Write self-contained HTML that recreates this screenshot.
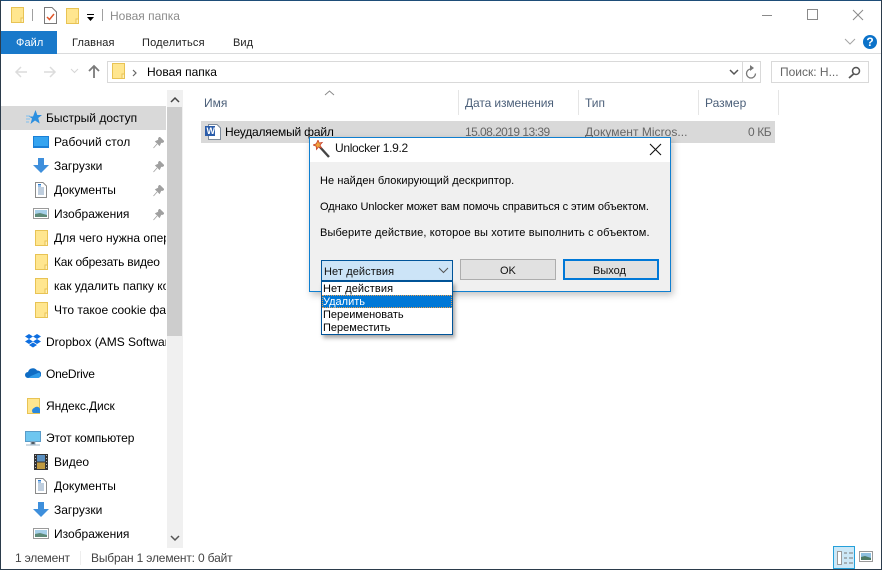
<!DOCTYPE html>
<html lang="ru"><head><meta charset="utf-8">
<style>
html,body{margin:0;padding:0;background:#fff}
#w{position:relative;width:882px;height:570px;overflow:hidden;background:#fff;font-family:"Liberation Sans",sans-serif;font-size:12px;color:#000}
#w div,#w svg,#w span.t{position:absolute}
.t{white-space:nowrap;line-height:16px;letter-spacing:0}
.r{font-size:11px;letter-spacing:.1px}
</style></head><body>
<div id="w">
<svg width="0" height="0" style="position:absolute">
<defs>
<g id="fold"><rect x=".5" y=".5" width="12" height="15" fill="#ffe68f" stroke="#e8c354"/><rect x="10" y="11" width="2.500" height="4.500" fill="#fff0b8" stroke="#e8c354" stroke-width="1"/></g>
<g id="doc"><path d="M.5.5H8L11.500 4V15.500H.5Z" fill="#fff" stroke="#8a8a8a"/><path d="M3 6h6M3 8h6M3 10h6M3 12h6" stroke="#7f9cbc"/><path d="M3 2.500h3M3 4h3" stroke="#2f7fd0"/></g>
<g id="img"><rect x=".5" y=".5" width="15" height="10" fill="#fff" stroke="#9a9a9a"/><rect x="2" y="2" width="12" height="7" fill="#a5cfe8"/><path d="M2 6l5-1 7 2v2H2z" fill="#5d8a78"/></g>
<g id="dl"><path d="M5 0h6v7h5l-8 8-8-8h5z" fill="#3e8fdc"/></g>
<g id="pin"><path d="M6.500 0L11 4.500 9.500 5.500 8 5.500 6.500 8.500 2.500 4.500 5.500 3 5.500 1.500zM4 7L.5 11" fill="#a0a0a0" stroke="#a0a0a0" stroke-width=".8"/></g>
</defs></svg>

<!-- window border -->
<div style="left:0;top:0;width:882px;height:1px;background:#1e4d78"></div>
<div style="left:0;top:0;width:1px;height:570px;background:#2b3b4b"></div>
<div style="right:0;top:0;width:1px;height:570px;background:#2b3b4b"></div>
<div style="left:0;top:569px;width:882px;height:1px;background:#2b3b4b"></div>

<!-- title bar -->
<svg style="left:11px;top:7px" width="14" height="17"><use href="#fold"/></svg>
<div style="left:32px;top:9px;width:1px;height:12px;background:#a0a0a0"></div>
<svg style="left:44px;top:7px" width="13" height="17"><path d="M.5.5H8L12.500 5V16.500H.5Z" fill="#fff" stroke="#7a7a7a"/><path d="M3 10l2.500 2.500L10 7" fill="none" stroke="#e0562a" stroke-width="1.500"/></svg>
<svg style="left:66px;top:8px" width="14" height="16"><use href="#fold"/></svg>
<svg style="left:86px;top:13px" width="9" height="9"><rect x="1" y="1" width="7" height="1" fill="#000"/><path d="M1 4h7L4.500 8z" fill="#000"/></svg>
<div style="left:102px;top:9px;width:1px;height:12px;background:#a0a0a0"></div>
<span class="t" style="left:110px;top:8px;color:#8b8b8b">Новая папка</span>
<div style="left:762px;top:15px;width:10px;height:1px;background:#8a8a8a"></div>
<div style="left:807px;top:9px;width:9px;height:9px;border:1px solid #8a8a8a"></div>
<svg style="left:852px;top:9px" width="12" height="12"><path d="M1 1l10 10M11 1L1 11" stroke="#8a8a8a" fill="none"/></svg>

<!-- ribbon -->
<div style="left:1px;top:31px;width:56px;height:23px;background:#1979ca"></div>
<span class="t r" style="left:16px;top:35px;color:#fff">Файл</span>
<span class="t r" style="left:72px;top:35px;color:#222">Главная</span>
<span class="t r" style="left:142px;top:35px;color:#222;letter-spacing:.2px">Поделиться</span>
<span class="t r" style="left:233px;top:35px;color:#222">Вид</span>
<div style="left:57px;top:53px;width:824px;height:1px;background:#dadbdc"></div>
<svg style="left:843px;top:37px" width="14" height="9"><path d="M2 2l5 5 5-5" fill="none" stroke="#a5a5a5"/></svg>
<div style="left:863px;top:35px;width:14px;height:14px;border-radius:50%;background:#0b72c9;color:#fff;font-weight:bold;font-size:12px;line-height:14px;text-align:center">?</div>

<!-- nav bar -->
<svg style="left:14px;top:65px" width="14" height="14"><path d="M13 7H2M7 2L2 7l5 5" fill="none" stroke="#dcdcdc" stroke-width="1.500"/></svg>
<svg style="left:43px;top:65px" width="14" height="14"><path d="M1 7h11M7 2l5 5-5 5" fill="none" stroke="#dcdcdc" stroke-width="1.500"/></svg>
<svg style="left:70px;top:68px" width="9" height="7"><path d="M1 1l3.500 3.500L8 1" fill="none" stroke="#d5d5d5"/></svg>
<svg style="left:87px;top:64px" width="14" height="15"><path d="M7 14V2M2 7l5-5 5 5" fill="none" stroke="#7a7a7a" stroke-width="1.800"/></svg>
<div style="left:107px;top:61px;width:652px;height:20px;border:1px solid #d9d9d9"></div>
<div style="left:742px;top:61px;width:1px;height:22px;background:#d9d9d9"></div>
<svg style="left:112px;top:63px" width="14" height="17"><use href="#fold"/></svg>
<svg style="left:132px;top:69px" width="6" height="8"><path d="M1 1l3 3-3 3" fill="none" stroke="#666" stroke-width="1.200"/></svg>
<span class="t" style="left:147px;top:64px">Новая папка</span>
<svg style="left:729px;top:69px" width="11" height="8"><path d="M1 1l4 4 4-4" fill="none" stroke="#555" stroke-width="1.500"/></svg>
<svg style="left:745px;top:64px" width="12" height="15"><path d="M6 3a4.500 4.500 0 1 0 4.500 4.500" fill="none" stroke="#777" stroke-width="1.300" transform="translate(0 2)"/><path d="M5 1l4 3-4 3z" fill="#777"/></svg>
<div style="left:771px;top:61px;width:96px;height:20px;border:1px solid #d9d9d9"></div>
<span class="t" style="left:780px;top:64px;color:#666">Поиск: Н...</span>
<svg style="left:848px;top:66px" width="13" height="13"><circle cx="8" cy="5" r="3.500" fill="none" stroke="#555" stroke-width="1.500"/><path d="M5.500 8L1 12" stroke="#555" stroke-width="1.800"/></svg>

<!-- sidebar -->
<div style="left:1px;top:106px;width:165px;height:24px;background:#d9d9d9"></div>
<div style="left:167px;top:90px;width:16px;height:458px;background:#f0f0f0"></div>
<div style="left:167px;top:107px;width:15px;height:229px;background:#cdcdcd"></div>
<svg style="left:170px;top:96px" width="10" height="8"><path d="M1 6l4-4 4 4" fill="none" stroke="#444" stroke-width="1.500"/></svg>
<svg style="left:170px;top:534px" width="10" height="8"><path d="M1 2l4 4 4-4" fill="none" stroke="#555" stroke-width="1.500"/></svg>

<svg style="left:26px;top:110px" width="16" height="15"><path d="M9.500 0l1.800 5H16l-3.800 3 1.500 5.500L9 10.500 4.500 14l1.500-5.500L3 6.500h4z" fill="#2b8fe0"/><path d="M0 6h4M0 9h4M0 12h3" stroke="#7ec0f0"/></svg>
<span class="t" style="left:46px;top:110px">Быстрый доступ</span>

<svg style="left:33px;top:136px" width="16" height="12"><rect width="16" height="12" fill="#1a7fd6"/><rect x="1" y="1" width="14" height="9" fill="#35a4f0"/></svg>
<span class="t" style="left:54px;top:134px;letter-spacing:.08px">Рабочий стол</span>
<svg style="left:153px;top:137px" width="11" height="12"><use href="#pin"/></svg>
<svg style="left:33px;top:158px" width="16" height="16"><use href="#dl"/></svg>
<span class="t" style="left:54px;top:158px">Загрузки</span>
<svg style="left:153px;top:161px" width="11" height="12"><use href="#pin"/></svg>
<svg style="left:35px;top:182px" width="12" height="16"><use href="#doc"/></svg>
<span class="t" style="left:54px;top:182px">Документы</span>
<svg style="left:153px;top:185px" width="11" height="12"><use href="#pin"/></svg>
<svg style="left:33px;top:208px" width="16" height="11"><use href="#img"/></svg>
<span class="t" style="left:54px;top:206px">Изображения</span>
<svg style="left:153px;top:209px" width="11" height="12"><use href="#pin"/></svg>

<svg style="left:35px;top:230px" width="13" height="16"><use href="#fold"/></svg>
<div style="left:54px;top:230px;width:112px;height:16px;overflow:hidden"><span class="t" style="left:0;top:0">Для чего нужна оперативная</span></div>
<svg style="left:35px;top:254px" width="13" height="16"><use href="#fold"/></svg>
<span class="t" style="left:54px;top:254px;letter-spacing:-.2px">Как обрезать видео</span>
<svg style="left:35px;top:278px" width="13" height="16"><use href="#fold"/></svg>
<div style="left:54px;top:278px;width:112px;height:16px;overflow:hidden"><span class="t" style="left:0;top:0">как удалить папку которая</span></div>
<svg style="left:35px;top:302px" width="13" height="16"><use href="#fold"/></svg>
<div style="left:54px;top:302px;width:112px;height:16px;overflow:hidden"><span class="t" style="left:0;top:0">Что такое cookie файлы</span></div>

<svg style="left:25px;top:334px" width="16" height="14" viewBox="0 0 16 14"><path d="M4 0l4 2.500L4 5 0 2.500zM12 0l4 2.500L12 5 8 2.500zM4 5l4 2.500L4 10 0 7.500zM12 5l4 2.500L12 10 8 7.500zM4 11l4-2.500 4 2.500-4 2.500z" fill="#0d6ee0"/></svg>
<div style="left:46px;top:334px;width:120px;height:16px;overflow:hidden"><span class="t" style="left:0;top:0">Dropbox (AMS Software</span></div>
<svg style="left:25px;top:367px" width="16" height="12"><path d="M3 11a3 3 0 0 1 0-6 5 5 0 0 1 9-1.500 3.500 3.500 0 0 1 1 7.500z" fill="#0f6cc4"/><path d="M3 11h10a3 3 0 0 0 1-5.500L6 9z" fill="#2f9ae8"/></svg>
<span class="t" style="left:46px;top:366px;letter-spacing:-.25px">OneDrive</span>
<svg style="left:27px;top:398px" width="14" height="16"><use href="#fold"/><path d="M6 15a3 3 0 0 1 1-5 3.500 3.500 0 0 1 6 1v4z" fill="#2a87dd"/></svg>
<span class="t" style="left:46px;top:398px;letter-spacing:-.1px">Яндекс.Диск</span>
<svg style="left:25px;top:431px" width="16" height="15"><rect x=".5" y=".5" width="15" height="10" fill="#6ec6f0" stroke="#5a9cc8"/><path d="M6 11h4v2H6zM1 14h14" stroke="#9fb4c4"/></svg>
<span class="t" style="left:46px;top:430px;letter-spacing:-.1px">Этот компьютер</span>
<svg style="left:34px;top:454px" width="14" height="16"><rect width="14" height="16" fill="#333"/><rect x="3" y="1" width="8" height="6.500" fill="#5a8fc0"/><rect x="3" y="8.500" width="8" height="6.500" fill="#c09a40"/><path d="M1.500 1v14M12.500 1v14" stroke="#bbb" stroke-dasharray="1 2"/></svg>
<span class="t" style="left:54px;top:454px">Видео</span>
<svg style="left:35px;top:478px" width="12" height="16"><use href="#doc"/></svg>
<span class="t" style="left:54px;top:478px">Документы</span>
<svg style="left:33px;top:502px" width="16" height="16"><use href="#dl"/></svg>
<span class="t" style="left:54px;top:502px">Загрузки</span>
<svg style="left:33px;top:528px" width="16" height="11"><use href="#img"/></svg>
<span class="t" style="left:54px;top:526px">Изображения</span>

<!-- columns -->
<svg style="left:324px;top:90px" width="11" height="6"><path d="M1 5l4.500-4L10 5" fill="none" stroke="#8a8a8a"/></svg>
<span class="t" style="left:204px;top:95px;color:#4c607a">Имя</span>
<div style="left:458px;top:90px;width:1px;height:25px;background:#e5e5e5"></div>
<span class="t" style="left:465px;top:95px;color:#4c607a;letter-spacing:-.1px">Дата изменения</span>
<div style="left:578px;top:90px;width:1px;height:25px;background:#e5e5e5"></div>
<span class="t" style="left:585px;top:95px;color:#4c607a">Тип</span>
<div style="left:698px;top:90px;width:1px;height:25px;background:#e5e5e5"></div>
<span class="t" style="left:705px;top:95px;color:#4c607a">Размер</span>
<div style="left:778px;top:90px;width:1px;height:25px;background:#e5e5e5"></div>

<!-- file row -->
<div style="left:201px;top:121px;width:574px;height:22px;background:#d9d9d9"></div>
<svg style="left:205px;top:124px" width="16" height="16"><path d="M3.500.5H12L15.500 4V15.500H3.500Z" fill="#fff" stroke="#7d8a9a"/><rect x="0" y="2" width="10" height="10" fill="#2a5caa"/><text x="1.500" y="10" font-size="9" font-weight="bold" fill="#fff" font-family="Liberation Sans">W</text></svg>
<span class="t" style="left:225px;top:124px;letter-spacing:-.2px">Неудаляемый файл</span>
<span class="t" style="left:465px;top:124px;color:#666;letter-spacing:-.55px">15.08.2019 13:39</span>
<span class="t" style="left:585px;top:124px;color:#666;letter-spacing:.03px">Документ Micros...</span>
<span class="t" style="left:748px;top:124px;color:#666;letter-spacing:-.4px">0 КБ</span>

<!-- dialog -->
<div style="left:309px;top:137px;width:360px;height:153px;background:#f0f0f0;border:1px solid #0f7fd0;box-shadow:2px 3px 7px rgba(0,0,0,.25)"></div>
<div style="left:310px;top:138px;width:360px;height:24px;background:#fff"></div>
<svg style="left:313px;top:140px" width="17" height="18"><path d="M6 6l10 11" stroke="#444" stroke-width="2.400"/><path d="M5 0l1.200 3 3-.5L7 5l1.500 3-3-1-2 2.500-.3-3.300L0 5l3.300-1.200z" fill="#efa43c" stroke="#c8402c" stroke-width=".8"/></svg>
<span class="t" style="left:335px;top:140px;color:#111;letter-spacing:-.32px">Unlocker 1.9.2</span>
<svg style="left:649px;top:143px" width="13" height="13"><path d="M1 1l11 11M12 1L1 12" stroke="#111" fill="none" stroke-width="1.100"/></svg>
<span class="t" style="left:320px;top:173px;font-size:11px;letter-spacing:.07px">Не найден блокирующий дескриптор.</span>
<span class="t" style="left:320px;top:199px;font-size:11px;letter-spacing:-.07px">Однако Unlocker может вам помочь справиться с этим объектом.</span>
<span class="t" style="left:320px;top:225px;font-size:11px;letter-spacing:.13px">Выберите действие, которое вы хотите выполнить с объектом.</span>

<!-- combo -->
<div style="left:321px;top:260px;width:130px;height:19px;background:#cce4f7;border:1px solid #005499"></div>
<span class="t" style="left:324px;top:264px;color:#111;font-size:11px;letter-spacing:.1px">Нет действия</span>
<svg style="left:438px;top:267px" width="11" height="7"><path d="M1 1l4.500 4.500L10 1" fill="none" stroke="#555"/></svg>
<div style="left:460px;top:259px;width:94px;height:19px;background:#e1e1e1;border:1px solid #adadad"></div>
<span class="t" style="left:500px;top:263px;color:#111;font-size:11px">OK</span>
<div style="left:563px;top:259px;width:92px;height:17px;background:#e1e1e1;border:2px solid #0078d7"></div>
<span class="t" style="left:593px;top:263px;color:#111;font-size:11px">Выход</span>

<!-- dropdown -->
<div style="left:321px;top:281px;width:130px;height:52px;background:#fff;border:1px solid #005499;box-shadow:2px 3px 4px rgba(0,0,0,.35)"></div>
<div style="left:322px;top:295px;width:130px;height:13px;background:#0078d7"></div>
<div style="left:322px;top:295px;width:128px;height:11px;border:1px dotted #e8a050"></div>
<span class="t" style="left:323px;top:282px;line-height:15px;font-size:11px;letter-spacing:.1px">Нет действия</span>
<span class="t" style="left:323px;top:295px;line-height:15px;color:#fff;font-size:11px">Удалить</span>
<span class="t" style="left:323px;top:308px;line-height:15px;font-size:11px">Переименовать</span>
<span class="t" style="left:323px;top:321px;line-height:15px;font-size:11px">Переместить</span>

<!-- status bar -->
<span class="t" style="left:15px;top:550px;color:#444;letter-spacing:-.2px">1 элемент</span>
<div style="left:80px;top:551px;width:1px;height:14px;background:#eee"></div>
<span class="t" style="left:91px;top:550px;color:#444;letter-spacing:-.17px">Выбран 1 элемент: 0 байт</span>
<div style="left:833px;top:546px;width:20px;height:21px;background:#cce8f7;border:1px solid #25a0da"></div>
<svg style="left:837px;top:551px" width="17" height="14"><rect x=".5" y=".5" width="4" height="13" fill="#fff" stroke="#999"/><path d="M7 2h3M12 2h4M7 7h3M12 7h4M7 12h3M12 12h4" stroke="#777"/></svg>
<svg style="left:859px;top:551px" width="14" height="11"><rect x=".5" y=".5" width="13" height="10" fill="#fff" stroke="#9a9a9a"/><rect x="2" y="2" width="10" height="7" fill="#8fc0e0"/><path d="M2 6l4-1 6 2v2H2z" fill="#4d7a66"/></svg>
</div>
</body></html>
